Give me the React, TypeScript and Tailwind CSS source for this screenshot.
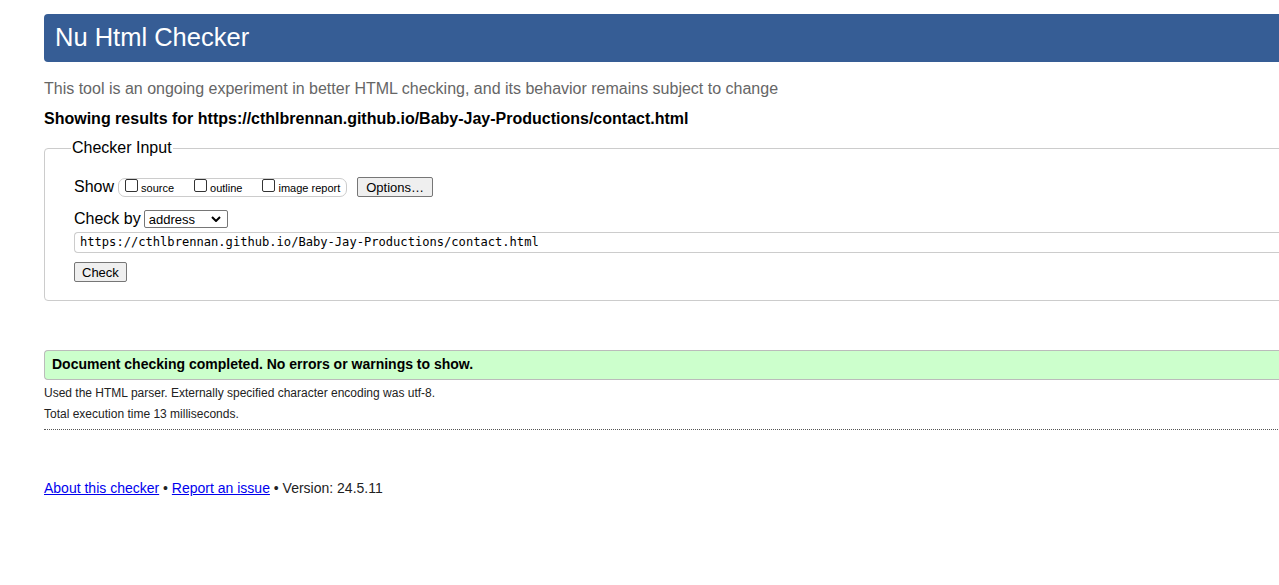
import React from "react";

const url = "https://cthlbrennan.github.io/Baby-Jay-Productions/contact.html";

function Checkbox({ label }: { label: string }) {
  return (
    <label className="flex items-center mr-[20px] last:mr-0">
      <span className="inline-block w-[13px] h-[13px] border border-[#333] rounded-[2px] bg-white mr-[3px] mb-[3px]" />
      <span className="text-[11px] leading-none mt-[2px]">{label}</span>
    </label>
  );
}

function Btn({ children, className = "" }: { children: React.ReactNode; className?: string }) {
  return (
    <button
      className={`border border-[#767676] rounded-[2px] bg-[#efefef] text-[13px] leading-none text-black ${className}`}
    >
      {children}
    </button>
  );
}

export default function App() {
  return (
    <div className="w-full overflow-hidden bg-white min-h-[585px] font-['Liberation_Sans',Arial,sans-serif] text-black">
      <div className="w-[1300px] ml-[44px] pt-[14px]">
        {/* title bar */}
        <h1 className="h-[48px] bg-[#365d95] rounded-l-[4px] text-white text-[25.5px] leading-[46px] pl-[11px]">
          Nu Html Checker
        </h1>

        <p className="mt-[17px] text-[16px] leading-[20px] text-[#666]">
          This tool is an ongoing experiment in better HTML checking, and its behavior remains subject to change
        </p>
        <p className="mt-[10px] text-[16px] leading-[20px] font-bold">Showing results for {url}</p>

        {/* form */}
        <fieldset className="mt-[10px] border border-[#ccc] rounded-[4px] pl-[29px] pt-[15px] pb-[16px]">
          <legend className="ml-[-3px] px-[1px] text-[16px] leading-[18px]">Checker Input</legend>

          <div className="flex items-center h-[22px] mt-[4px]">
            <span className="text-[16px] mr-[4px]">Show</span>
            <div className="flex items-center h-[19px] border border-[#ccc] rounded-[7px] px-[6px]">
              <Checkbox label="source" />
              <Checkbox label="outline" />
              <Checkbox label="image report" />
            </div>
            <Btn className="ml-[10px] h-[20px] px-[8px]">Options…</Btn>
          </div>

          <div className="flex items-center h-[20px] mt-[11px]">
            <span className="text-[16px] mr-[3px]">Check by</span>
            <div className="flex items-center justify-between w-[84px] h-[18px] border border-[#767676] rounded-[2px] pl-[4px] pr-[6px]">
              <span className="text-[13px] leading-none">address</span>
              <svg width="10" height="6" viewBox="0 0 10 6">
                <path d="M1 1l4 4 4-4" stroke="#000" strokeWidth="2" fill="none" />
              </svg>
            </div>
          </div>

          <div className="h-[21px] mt-[3px] border border-[#ccc] rounded-l-[4px] border-r-0 pl-[5px] flex items-center font-['DejaVu_Sans_Mono',monospace] text-[12.1px]">
            {url}
          </div>

          <Btn className="mt-[9px] h-[20px] px-[7px] text-[13.5px]">Check</Btn>
        </fieldset>

        {/* result */}
        <div className="mt-[49px] h-[30px] bg-[#ccffcc] border border-[#bbb] border-r-0 rounded-l-[4px] flex items-center pl-[7px] text-[14px] font-bold">
          Document checking completed. No errors or warnings to show.
        </div>
        <p className="mt-[6px] text-[12px] leading-[14px] text-[#222]">
          Used the HTML parser. Externally specified character encoding was utf-8.
        </p>
        <p className="mt-[7px] text-[12px] leading-[14px] text-[#222]">Total execution time 13 milliseconds.</p>
        <hr className="mt-[8px] border-0 border-t border-dotted border-[#555]" />

        <p className="mt-[50px] text-[14px] leading-[16px] text-[#222]">
          <a className="text-[#0000ee] underline" href="#">About this checker</a> •{" "}
          <a className="text-[#0000ee] underline" href="#">Report an issue</a> • Version: 24.5.11
        </p>
      </div>
    </div>
  );
}
